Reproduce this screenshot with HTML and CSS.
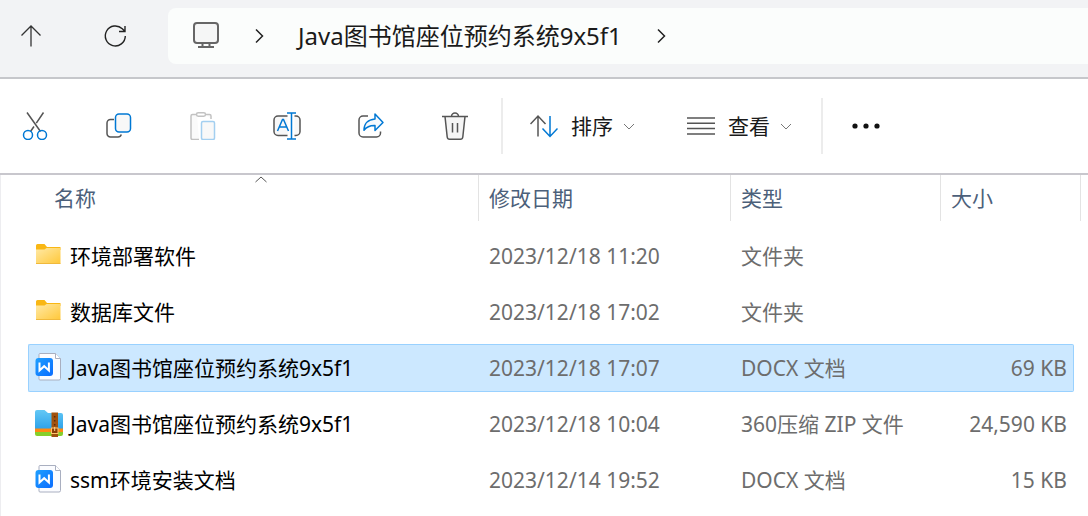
FILE: index.html
```html
<!DOCTYPE html>
<html lang="zh-CN">
  <head>
    <meta charset="UTF-8" />
    <meta name="viewport" content="width=device-width, initial-scale=1.0" />
    <title>文件资源管理器</title>
    <link rel="stylesheet" href="styles.css">
  </head>
  <body>
    <!-- icons used more than once -->
    <svg class="defs" width="0" height="0" aria-hidden="true">
      <defs>
        <linearGradient id="folderFill" x1="0" y1="0" x2="1" y2="1">
          <stop offset="0" stop-color="#ffe9a6" />
          <stop offset="1" stop-color="#ffc83a" />
        </linearGradient>
        <linearGradient id="docFill" x1="0" y1="0" x2="1" y2="1">
          <stop offset="0" stop-color="#1fa0ff" />
          <stop offset="1" stop-color="#0a6cff" />
        </linearGradient>
        <linearGradient id="zipFill" x1="0" y1="0" x2="0" y2="1">
          <stop offset="0" stop-color="#63c8f5" />
          <stop offset="1" stop-color="#2fa3ea" />
        </linearGradient>
        <symbol id="folder" viewBox="0 0 28 28">
          <path d="M1 4.500a1.500 1.500 0 0 1 1.500-1.500h7l2.500 3h13.500v3h-24.500z" fill="#f9b714" />
          <path d="M1 8.500h8.500l2-1.500h14v15.500h-24.500z" fill="url(#folderFill)" />
          <path d="M1 22.500h24.500" stroke="#f0b93c" />
        </symbol>
        <symbol id="docx" viewBox="0 0 28 28">
          <path d="M5 0.500h15.500l5 5v20a1.500 1.500 0 0 1-1.500 1.500h-19a1 1 0 0 1-1-1v-24.500a1 1 0 0 1 1-1z" fill="#fbfcff" stroke="#a9afc0" />
          <path d="M20.500 0.500v5h5" fill="#fff" stroke="#a9afc0" />
          <rect x="0.500" y="5" width="17.500" height="18" rx="3" fill="url(#docFill)" />
          <path d="M4.500 9.500v8l4.700-4.300 4.700 4.300v-8" fill="none" stroke="#fff" stroke-width="2" />
        </symbol>
        <symbol id="down" viewBox="0 0 12 12">
          <path d="M1 4l5 5 5-5" fill="none" stroke="#777" />
        </symbol>
        <symbol id="right" viewBox="0 0 16 16">
          <path d="M5 1.500l6.500 6.500-6.500 6.500" fill="none" stroke="#222" stroke-width="1.500" />
        </symbol>
      </defs>
    </svg>

    <header class="navbar">
      <button class="nav-up" type="button" aria-label="向上">
        <svg width="24" height="24" viewBox="0 0 24 24" fill="none" stroke="#333" stroke-width="1.300">
          <path d="M12 22.500v-20.500M2.500 11.500l9.500-9.500 9.500 9.500" />
        </svg>
      </button>
      <button class="nav-reload" type="button" aria-label="刷新">
        <svg width="24" height="24" viewBox="0 0 24 24" fill="none" stroke="#222" stroke-width="1.400">
          <path d="M22.300 12a10 10 0 1 1-3-7.200l2.500 2.400M22 2v5.500h-6" />
        </svg>
      </button>
      <nav class="address">
        <svg width="28" height="28" viewBox="0 0 28 28" fill="none" stroke="#666" stroke-width="2">
          <rect x="2" y="1" width="24" height="20" rx="3" fill="#f5f6f6" />
          <path d="M10.500 21v4M17.500 21v4M6 25h16" />
        </svg>
        <svg width="16" height="16"><use href="#right" /></svg>
        <a class="crumb" href="#">Java图书馆座位预约系统9x5f1</a>
        <svg width="16" height="16"><use href="#right" /></svg>
      </nav>
    </header>

    <div class="toolbar">
      <div class="tools">
        <button type="button" aria-label="剪切">
          <svg width="28" height="28" viewBox="0 0 28 28" fill="none" stroke-width="1.500">
            <path d="M6 0.500l13.500 19M22.500 0.500l-7.200 10.700M13 14.500l-3.500 5" stroke="#555" />
            <g stroke="#0078d4">
              <circle cx="7" cy="23" r="4.500" />
              <circle cx="21" cy="23" r="4.500" />
            </g>
          </svg>
        </button>
        <button type="button" aria-label="复制">
          <svg width="28" height="28" viewBox="0 0 28 28" fill="none" stroke-width="1.500">
            <path d="M9 7.500h-3.500a3.500 3.500 0 0 0-3.500 3.500v10.500a3.500 3.500 0 0 0 3.500 3.500h7.500a3.500 3.500 0 0 0 3.300-2.500" stroke="#555" />
            <rect x="10.500" y="2" width="15" height="18" rx="3.500" fill="#f8f8f8" stroke="#0078d4" />
          </svg>
        </button>
        <button type="button" aria-label="粘贴" disabled>
          <svg width="28" height="28" viewBox="0 0 28 28" fill="none" stroke-width="1.500">
            <path d="M8 2.500h-4.500a1.500 1.500 0 0 0-1.500 1.500v22a1.500 1.500 0 0 0 1.500 1.500h6.500M16 2.500h4.500a1.500 1.500 0 0 1 1.500 1.500v3" fill="#fafafa" stroke="#c2c2c2" />
            <rect x="7.500" y="0.800" width="9" height="3.500" rx="1.700" fill="#fff" stroke="#c2c2c2" />
            <rect x="12.500" y="9.500" width="13" height="18" rx="1.500" fill="#f8f8f8" stroke="#a3cff0" />
          </svg>
        </button>
        <button type="button" aria-label="重命名">
          <svg width="28" height="28" viewBox="0 0 28 28" fill="none" stroke-width="1.500">
            <path d="M14.500 4h-9.500a4 4 0 0 0-4 4v11.500a4 4 0 0 0 4 4h9.500M21.500 4h1.500a4 4 0 0 1 4 4v11.500a4 4 0 0 1-4 4h-1.500" fill="#f8f8f8" stroke="#555" />
            <path d="M4.500 19l5-11.500h1l5 11.500M6.500 15h7M18.500 1v26M14 1h9M14 27h9" stroke="#0078d4" />
          </svg>
        </button>
        <button type="button" aria-label="共享">
          <svg width="28" height="28" viewBox="0 0 28 28" fill="none" stroke-width="1.500" stroke-linejoin="round">
            <path d="M11 4h-5a4 4 0 0 0-4 4v13a4 4 0 0 0 4 4h13.500a4 4 0 0 0 4-4v-1.500" stroke="#555" />
            <path d="M18 2l8 8.500-8 8v-5c-5-.2-8.500 1.500-11 4.800 0-6 3.500-10.800 11-11.300z" fill="#f5f9fd" stroke="#0078d4" />
          </svg>
        </button>
        <button type="button" aria-label="删除">
          <svg width="28" height="28" viewBox="0 0 28 28" fill="none" stroke="#555" stroke-width="1.500">
            <path d="M4 4.500l2.200 20.500a2.500 2.500 0 0 0 2.500 2.200h10.600a2.500 2.500 0 0 0 2.500-2.200l2.200-20.500" fill="#f5f5f5" />
            <path d="M1 4.500h26M10.500 4.500a3.500 3.500 0 0 1 7 0M11.500 11v9.500M16.500 11v9.500" />
          </svg>
        </button>
      </div>

      <div class="menus">
        <button class="menu" type="button">
          <svg width="28" height="28" viewBox="0 0 28 28" fill="none" stroke-width="1.500">
            <path d="M8 24.500v-20.500M0.500 12l7.500-8 7.500 8" stroke="#555" />
            <path d="M20 4v20.500M12.500 16.500l7.500 8 7.500-8" stroke="#0078d4" />
          </svg>
          <span class="menu-name">排序</span>
          <svg width="12" height="12"><use href="#down" /></svg>
        </button>
        <button class="menu" type="button">
          <svg width="28" height="28" viewBox="0 0 28 28" fill="none" stroke="#555" stroke-width="1.500">
            <path d="M0 6h28M0 11.300h28M0 16.600h28M0 22h28" />
          </svg>
          <span class="menu-name">查看</span>
          <svg width="12" height="12"><use href="#down" /></svg>
        </button>
      </div>

      <button class="more" type="button" aria-label="查看更多">
        <svg width="28" height="28" viewBox="0 0 28 28" fill="#111">
          <circle cx="3" cy="14" r="2.600" />
          <circle cx="14" cy="14" r="2.600" />
          <circle cx="25" cy="14" r="2.600" />
        </svg>
      </button>
    </div>

    <main class="content">
      <table class="files">
        <thead>
          <tr>
            <th class="col-name">
              <button type="button">
                名称
                <svg class="sort" width="12" height="8" viewBox="0 0 12 8" fill="none" stroke="#555"><path d="M0.500 7l5.500-5 5.500 5" /></svg>
              </button>
            </th>
            <th class="col-date"><button type="button">修改日期</button></th>
            <th class="col-type"><button type="button">类型</button></th>
            <th class="col-size"><button type="button">大小</button></th>
          </tr>
        </thead>
        <tbody>
          <tr>
            <td><span class="file"><svg width="28" height="28"><use href="#folder" /></svg>环境部署软件</span></td>
            <td>2023/12/18 11:20</td>
            <td>文件夹</td>
            <td></td>
          </tr>
          <tr>
            <td><span class="file"><svg width="28" height="28"><use href="#folder" /></svg>数据库文件</span></td>
            <td>2023/12/18 17:02</td>
            <td>文件夹</td>
            <td></td>
          </tr>
          <tr class="selected">
            <td><span class="file"><svg width="28" height="28"><use href="#docx" /></svg>Java图书馆座位预约系统9x5f1</span></td>
            <td>2023/12/18 17:07</td>
            <td>DOCX 文档</td>
            <td>69 KB</td>
          </tr>
          <tr>
            <td>
              <span class="file">
                <svg width="28" height="28" viewBox="0 0 28 28">
                  <path d="M0 20h28v5a2 2 0 0 1-2 2h-24a2 2 0 0 1-2-2z" fill="#86cf2a" />
                  <path d="M0 17h28v6h-28z" fill="#ff8a12" />
                  <path d="M0 3a2 2 0 0 1 2-2h7.500l3.500 3h13a2 2 0 0 1 2 2v13.500h-28z" fill="url(#zipFill)" />
                  <path d="M16.500 3.500h6.500v24.500h-6.500z" fill="#a0520f" />
                  <path d="M19.700 7v1.500M19.700 11v1.500M19.700 15v1.500" stroke="#5b2a05" stroke-width="1.500" />
                  <rect x="16.500" y="19" width="6.500" height="5.500" fill="#8a3f08" stroke="#ffc46b" />
                  <path d="M19.700 18v4" stroke="#ffd48c" />
                </svg>Java图书馆座位预约系统9x5f1</span>
            </td>
            <td>2023/12/18 10:04</td>
            <td>360压缩 ZIP 文件</td>
            <td>24,590 KB</td>
          </tr>
          <tr>
            <td><span class="file"><svg width="28" height="28"><use href="#docx" /></svg>ssm环境安装文档</span></td>
            <td>2023/12/14 19:52</td>
            <td>DOCX 文档</td>
            <td>15 KB</td>
          </tr>
        </tbody>
      </table>
    </main>
  </body>
</html>
```
FILE: styles.css
```css
* {
  box-sizing: border-box;
}

body {
  margin: 0;
  min-height: 100vh;
  display: flex;
  flex-direction: column;
  background-color: #fff;
  color: #000;
  font-family: "Noto Sans", "Noto Sans CJK SC", sans-serif;
  font-size: 21px;
  line-height: 28px;
}

button {
  display: flex;
  align-items: center;
  justify-content: center;
  padding: 0;
  border: 0;
  background: none;
  color: inherit;
  font: inherit;
}

svg {
  flex: none;
  display: block;
}

.defs {
  position: absolute;
}

.navbar {
  display: flex;
  gap: 12px;
  padding: 8px 0 13px;
  background-color: #f2f3f5;
  border-bottom: 2px solid #c6c7cb;
}

.nav-up {
  width: 62px;
}

.nav-reload {
  width: 82px;
}

.address {
  flex: 1;
  display: flex;
  align-items: center;
  gap: 31px;
  height: 56px;
  padding-left: 24px;
  border-radius: 8px 0 0 8px;
  background-color: #fbfdfc;
}

.crumb {
  color: #1a1a1a;
  font-size: 24px;
  text-decoration: none;
  white-space: nowrap;
}

.toolbar {
  display: flex;
  align-items: center;
  padding: 19px 7px;
  border-bottom: 2px solid #c8c7cd;
}

.tools {
  display: flex;
  gap: 28px;
}

.tools button {
  width: 56px;
  height: 56px;
}

.menus {
  display: flex;
  gap: 52px;
  height: 56px;
  margin-left: 18px;
  padding: 0 29px 0 27px;
  border: solid #ececec;
  border-width: 0 2px;
}

.menu-name {
  margin: 0 10px 0 13px;
  color: #1a1a1a;
}

.more {
  margin-left: 29px;
}

.content {
  flex: 1;
  padding: 0 14px 0 27px;
  border-left: 1px solid #ededf0;
}

.files {
  width: 100%;
  margin-top: -8px;
  table-layout: fixed;
  border-collapse: separate;
  border-spacing: 0 8px;
}

.files th {
  height: 49px;
  padding: 0;
  vertical-align: top;
  font-weight: normal;
}

.files th button {
  position: relative;
  justify-content: flex-start;
  width: 100%;
  height: 46px;
  padding-left: 10px;
  border-right: 1px solid #e3e3e3;
  color: #4c607a;
}

.files .col-name button {
  width: calc(100% - 16px);
  margin-left: 16px;
}

.files .col-size button {
  width: calc(100% + 7px);
}

.col-date {
  width: 252px;
}

.col-type {
  width: 210px;
}

.col-size {
  width: 133px;
}

.sort {
  position: absolute;
  top: 0;
  left: 50%;
  margin-left: -6px;
}

.files td {
  height: 48px;
  padding: 0 10px;
  border: solid transparent;
  border-width: 1px 0;
  color: #6d6d6d;
  white-space: nowrap;
}

.files td:first-child {
  padding-left: 6px;
  border-left-width: 1px;
  border-radius: 2px 0 0 2px;
  color: #000;
}

.files td:last-child {
  padding-right: 6px;
  border-right-width: 1px;
  border-radius: 0 2px 2px 0;
  text-align: right;
}

.files .selected td {
  border-color: #99d1ff;
  background-color: #cce8ff;
}

.file {
  display: flex;
  align-items: center;
  gap: 7px;
}

.file svg {
  margin-bottom: 2px;
}
```
